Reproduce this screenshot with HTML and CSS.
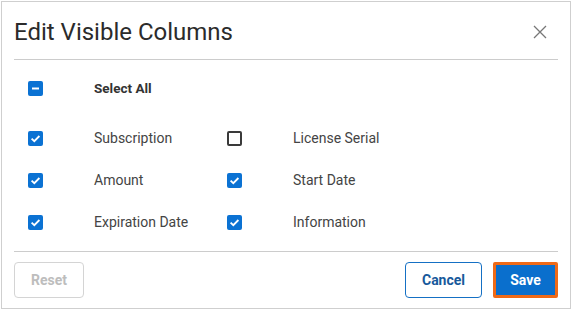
FILE: index.html
```html
<!DOCTYPE html>
<html lang="en">
<head>
    <meta charset="UTF-8">
    <meta name="viewport" content="width=device-width, initial-scale=1.0">
    <title>Edit Visible Columns</title>
    <link rel="stylesheet" href="styles.css">
</head>
<body>
    <div class="dialog">
        <div class="dialog-header">
            <h1 class="dialog-title">Edit Visible Columns</h1>
            <button class="close-btn" aria-label="Close">
                <svg width="14" height="14" viewBox="0 0 14 14">
                    <path d="M1 1 L13 13 M13 1 L1 13" stroke="#777" stroke-width="1.3" fill="none"/>
                </svg>
            </button>
        </div>

        <div class="dialog-body">
            <div class="option select-all">
                <span class="box checked">
                    <svg width="15" height="15" viewBox="0 0 15 15"><path d="M4 7.5 H11" stroke="#fff" stroke-width="2"/></svg>
                </span>
                <span class="label">Select All</span>
            </div>

            <div class="columns">
                <div class="option">
                    <span class="box checked">
                        <svg width="15" height="15" viewBox="0 0 15 15"><path d="M3.6 7.6 L6.3 10.2 L11.4 5" stroke="#fff" stroke-width="1.8" fill="none"/></svg>
                    </span>
                    <span class="label">Subscription</span>
                </div>
                <div class="option">
                    <span class="box"></span>
                    <span class="label">License Serial</span>
                </div>
                <div class="option">
                    <span class="box checked">
                        <svg width="15" height="15" viewBox="0 0 15 15"><path d="M3.6 7.6 L6.3 10.2 L11.4 5" stroke="#fff" stroke-width="1.8" fill="none"/></svg>
                    </span>
                    <span class="label">Amount</span>
                </div>
                <div class="option">
                    <span class="box checked">
                        <svg width="15" height="15" viewBox="0 0 15 15"><path d="M3.6 7.6 L6.3 10.2 L11.4 5" stroke="#fff" stroke-width="1.8" fill="none"/></svg>
                    </span>
                    <span class="label">Start Date</span>
                </div>
                <div class="option">
                    <span class="box checked">
                        <svg width="15" height="15" viewBox="0 0 15 15"><path d="M3.6 7.6 L6.3 10.2 L11.4 5" stroke="#fff" stroke-width="1.8" fill="none"/></svg>
                    </span>
                    <span class="label">Expiration Date</span>
                </div>
                <div class="option">
                    <span class="box checked">
                        <svg width="15" height="15" viewBox="0 0 15 15"><path d="M3.6 7.6 L6.3 10.2 L11.4 5" stroke="#fff" stroke-width="1.8" fill="none"/></svg>
                    </span>
                    <span class="label">Information</span>
                </div>
            </div>
        </div>

        <div class="dialog-footer">
            <button class="btn btn-reset" disabled>Reset</button>
            <div class="actions">
                <button class="btn btn-cancel">Cancel</button>
                <button class="btn btn-save">Save</button>
            </div>
        </div>
    </div>
</body>
</html>
```

FILE: styles.css
```css
body {
    margin: 0;
    font-family: Roboto, "Liberation Sans", Arial, sans-serif;
    background: #fff;
}

.dialog {
    margin: 1px;
    width: 570px;
    height: 308px;
    box-sizing: border-box;
    border: 1px solid #cfcfcf;
    background: #fff;
    display: flex;
    flex-direction: column;
}

.dialog-header {
    margin: 0 12px;
    height: 58px;
    padding-top: 3px;
    box-sizing: border-box;
    display: flex;
    align-items: center;
    justify-content: space-between;
    border-bottom: 1px solid #cccccc;
}

.dialog-title {
    margin: 0;
    font-size: 24px;
    font-weight: 400;
    color: #2b2b2b;
}

.close-btn {
    border: none;
    background: none;
    padding: 0;
    margin-right: 11px;
    width: 14px;
    height: 14px;
    display: flex;
    cursor: pointer;
}

.dialog-body {
    padding: 15px 14px 16px;
    margin: 0 12px;
    border-bottom: 1px solid #cccccc;
}

.option {
    display: flex;
    align-items: center;
    height: 26px;
}

.select-all {
    margin-bottom: 24px;
}

.select-all .label {
    font-weight: 700;
    font-size: 13.5px;
    color: #333;
}

.columns {
    display: grid;
    grid-template-columns: 199px 1fr;
    row-gap: 16px;
}

.box {
    width: 15px;
    height: 15px;
    box-sizing: border-box;
    border: 2px solid #3a3a3a;
    border-radius: 2px;
    display: flex;
    flex-shrink: 0;
}

.box.checked {
    border: none;
    background: #0b72d3;
}

.label {
    margin-left: 51px;
    font-size: 14px;
    color: #444;
}

.dialog-footer {
    margin: 0 12px;
    padding: 10px 0 8px;
    display: flex;
    justify-content: space-between;
}

.actions {
    display: flex;
    gap: 11px;
}

.btn {
    height: 36px;
    border-radius: 4px;
    font-family: inherit;
    font-size: 14px;
    font-weight: 700;
    cursor: pointer;
    box-sizing: border-box;
}

.btn-reset {
    width: 70px;
    background: #fff;
    border: 1px solid #d4d4d4;
    color: #bdbdbd;
}

.btn-cancel {
    width: 77px;
    background: #fff;
    border: 1px solid #1570c4;
    color: #17599b;
}

.btn-save {
    width: 65px;
    background: #0a6fcd;
    border: 3px solid #ef6a18;
    border-radius: 2px;
    color: #fff;
}
```
